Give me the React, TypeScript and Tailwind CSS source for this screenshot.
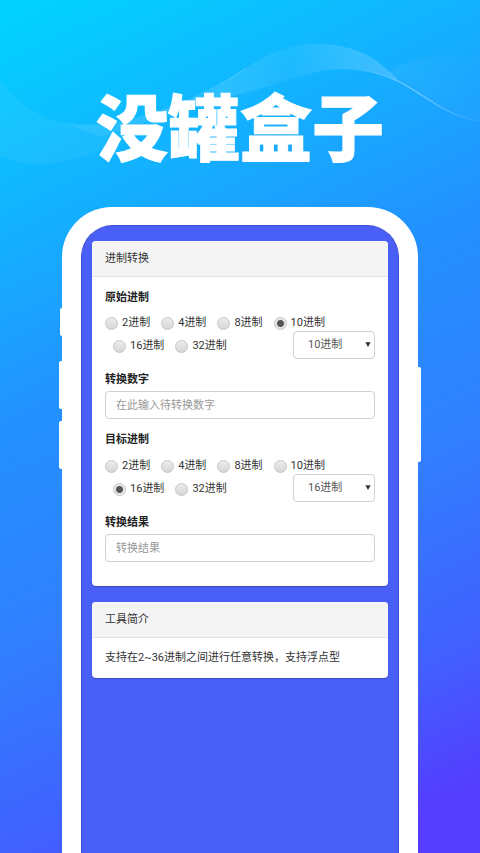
import { useState } from "react";

const ROWS = [
  [2, 4, 8, 10],
  [16, 32],
];
const ALL_BASES = Array.from({ length: 35 }, (_, i) => i + 2);

const radioCls =
  "m-0 size-[13px] shrink-0 appearance-none rounded-full border border-[#c6c6c6] bg-linear-to-b from-[#ececec] to-[#d6d6d6] checked:bg-[radial-gradient(circle,#555_3px,#e6e6e6_4px)]";
const fieldCls =
  "block h-7 w-full rounded-[4px] border border-[#d0d0d0] bg-white px-[10px] text-[11px] text-[#555] outline-none placeholder:text-[#999]";
const headingCls = "block pt-px leading-4 font-bold text-[#222]";

function convert(value: string, from: number, to: number) {
  const [int, frac] = value.trim().split(".");
  if (!int) return "";
  let n = parseInt(int, from);
  if (frac) {
    n += parseInt(frac, from) / Math.pow(from, frac.length);
  }
  return Number.isNaN(n) ? "" : n.toString(to);
}

function BasePicker({ name, value, onChange }: { name: string; value: number; onChange: (n: number) => void }) {
  const radio = (base: number) => (
    <label key={base} className="flex h-4 items-end gap-1 leading-[18px]">
      <input type="radio" name={name} checked={value === base} onChange={() => onChange(base)} className={radioCls} />
      <span className="self-start">{base}进制</span>
    </label>
  );

  return (
    <div role="radiogroup" aria-label={name}>
      <div className="flex h-[19px] items-center gap-[11px]">{ROWS[0].map(radio)}</div>
      <div className="flex items-center gap-[11px] pl-2">
        {ROWS[1].map(radio)}
        <div className="relative ml-auto w-[82px]">
          <select
            aria-label={name}
            value={value}
            onChange={(e) => onChange(Number(e.target.value))}
            className="block h-7 w-full appearance-none rounded-[4px] border border-[#d0d0d0] bg-white pr-4 pl-[14px] text-[11px] text-[#555] outline-none"
          >
            {ALL_BASES.map((b) => (
              <option key={b} value={b}>
                {b}进制
              </option>
            ))}
          </select>
          <svg viewBox="0 0 6 5" className="pointer-events-none absolute top-[11px] right-1 h-[5px] w-[6px]" fill="#333">
            <path d="M0.3 0.2h5.4L3 5z" />
          </svg>
        </div>
      </div>
    </div>
  );
}

function Card({ title, children }: { title: string; children: React.ReactNode }) {
  return (
    <section className="overflow-hidden rounded-[4px] bg-white shadow-[0_1px_1px_rgba(0,0,0,0.25)]">
      <h2 className="border-b border-[#e2e2e2] bg-[#f4f4f4] px-[13px] pt-[10px] pb-[9px] leading-4">{title}</h2>
      {children}
    </section>
  );
}

function Waves() {
  return (
    <svg viewBox="0 0 480 180" preserveAspectRatio="none" className="absolute inset-x-0 top-0 h-[180px] w-full" aria-hidden="true">
      <defs>
        <linearGradient id="crest" x1="0" x2="1" y1="0" y2="0">
          <stop offset="0" stopColor="#fff" stopOpacity="0.16" />
          <stop offset="0.5" stopColor="#fff" stopOpacity="0.05" />
          <stop offset="0.8" stopColor="#fff" stopOpacity="0.15" />
          <stop offset="1" stopColor="#fff" stopOpacity="0.18" />
        </linearGradient>
        <linearGradient id="tail" x1="0" x2="1" y1="0" y2="0">
          <stop offset="0" stopColor="#fff" stopOpacity="0.05" />
          <stop offset="1" stopColor="#fff" stopOpacity="0.01" />
        </linearGradient>
        <linearGradient id="edge" x1="0" x2="1" y1="0" y2="0">
          <stop offset="0" stopColor="#fff" stopOpacity="0.05" />
          <stop offset="0.5" stopColor="#fff" stopOpacity="0.4" />
          <stop offset="1" stopColor="#fff" stopOpacity="0.05" />
        </linearGradient>
      </defs>
      <path d="M0 80C20 110 52 125 90 125C125 125 160 112 200 94L200 104C150 120 100 164 38 164C22 164 10 160 0 156Z" fill="#fff" fillOpacity="0.05" />
      <path d="M65 123C110 129 150 115 200 94L200 100C160 118 130 127 100 137Z" fill="#fff" fillOpacity="0.07" />
      <path d="M180 105C215 90 228 80 246 68C270 52 290 43 322 44C366 46 384 66 400 82C385 75 368 69 345 69C300 69 270 94 180 105Z" fill="url(#crest)" />
      <path d="M388 72C405 60 435 53 480 56L480 121C450 118 425 96 400 82Z" fill="url(#tail)" />
      <path d="M345 69C368 69 385 75 400 82C425 96 450 118 480 121" fill="none" stroke="url(#edge)" strokeWidth="1.2" />
      <path d="M200 94C225 83 234 76 246 68" fill="none" stroke="#fff" strokeOpacity="0.2" />
    </svg>
  );
}

export default function App() {
  const [from, setFrom] = useState(10);
  const [to, setTo] = useState(16);
  const [num, setNum] = useState("");

  return (
    <div className="relative flex min-h-screen flex-col overflow-hidden bg-[linear-gradient(155deg,#00d4ff_0%,#12b4ff_20%,#2391ff_40%,#3080ff_60%,#4160ff_80%,#553cff_94%)] font-[Roboto,'Noto_Sans_CJK_SC',sans-serif] text-[11px] text-[#333]">
      <Waves />
      <h1 className="relative pt-[76px] text-center font-['Noto_Sans_CJK_SC',sans-serif] text-[72px] leading-[96px] font-black text-white [-webkit-text-stroke:1px_white]">
        没罐盒子
      </h1>

      <div className="relative mx-[62px] mt-[35px] flex flex-1 flex-col rounded-t-[50px] bg-white px-[19px] pt-[18px]">
        {/* side buttons */}
        <span className="absolute top-[101px] -left-[2px] h-[28px] w-1 rounded-l-xs bg-white" />
        <span className="absolute top-[154px] -left-[3px] h-[48px] w-1 rounded-l-xs bg-white" />
        <span className="absolute top-[214px] -left-[3px] h-[48px] w-1 rounded-l-xs bg-white" />
        <span className="absolute top-[160px] -right-[3px] h-[95px] w-1 rounded-r-xs bg-white" />

        <main className="flex flex-1 flex-col gap-4 rounded-t-[32px] border-x border-t border-[#4150d8] bg-[#4a5ff6] px-[10px] pt-[15px]">
          <Card title="进制转换">
            <form className="flex flex-col gap-3 px-[13px] pt-3 pb-6" onSubmit={(e) => e.preventDefault()}>
              <div>
                <h3 className={headingCls + " mb-[6px]"}>原始进制</h3>
                <BasePicker name="原始进制" value={from} onChange={setFrom} />
              </div>
              <div>
                <label htmlFor="num" className={headingCls + " mb-[3px]"}>转换数字</label>
                <input id="num" type="text" placeholder="在此输入待转换数字" value={num} onChange={(e) => setNum(e.target.value)} className={fieldCls} />
              </div>
              <div>
                <h3 className={headingCls + " mb-[7px]"}>目标进制</h3>
                <BasePicker name="目标进制" value={to} onChange={setTo} />
              </div>
              <div>
                <label htmlFor="result" className={headingCls + " mb-[3px]"}>转换结果</label>
                <input id="result" type="text" placeholder="转换结果" readOnly value={convert(num, from, to)} className={fieldCls} />
              </div>
            </form>
          </Card>

          <Card title="工具简介">
            <p className="px-[13px] py-3 leading-4">支持在2~36进制之间进行任意转换，支持浮点型</p>
          </Card>
        </main>
      </div>
    </div>
  );
}
